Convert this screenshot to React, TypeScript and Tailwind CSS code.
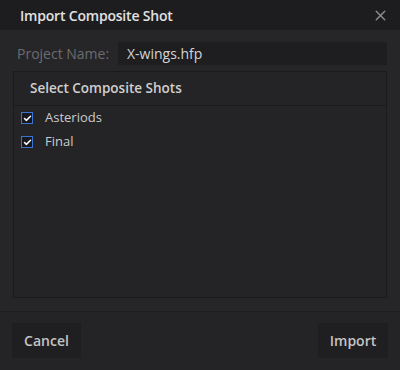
import { X, Check } from "lucide-react"

const shots = ["Asteriods", "Final"]

export default function App() {
    return (
        <div
            className="w-[400px] h-[370px] bg-[#262628] flex flex-col overflow-hidden"
            style={{ fontFamily: '"Open Sans", "Liberation Sans", sans-serif' }}
        >
            {/* Title bar */}
            <div className="h-[30px] bg-[#1d1d1f] flex items-center justify-between pl-5 pr-[11px] shrink-0">
                <span className="text-[14px] font-semibold text-[#e2e2e2] tracking-[-0.2px]">Import Composite Shot</span>
                <X className="w-[17px] h-[17px] text-[#8c8c8c]" strokeWidth={2} />
            </div>

            {/* Body */}
            <div className="flex-1 flex flex-col px-[13px] pt-3">
                <div className="flex items-center h-[23px]">
                    <span className="w-[105px] pl-1 text-[14px] text-[#6c6c6e]">Project Name:</span>
                    <div className="flex-1 h-full bg-[#1e1e20] flex items-center pl-[9px] text-[14px] text-[#d4d4d4]">
                        X-wings.hfp
                    </div>
                </div>

                <div className="mt-[6px] h-[227px] bg-[#242426] border border-[#1b1b1d] flex flex-col">
                    <div className="h-[34px] flex items-center pl-4 border-b border-[#1b1b1d] text-[13.5px] font-semibold text-[#cfcfcf]">
                        Select Composite Shots
                    </div>
                    <div className="flex flex-col">
                        {shots.map((s) => (
                            <div key={s} className="h-[24px] flex items-center pl-[7px] gap-[12px]">
                                <div className="w-[12px] h-[12px] border border-[#3d74d4] bg-[#16181d] flex items-center justify-center">
                                    <Check className="w-[9px] h-[9px] text-white" strokeWidth={4} />
                                </div>
                                <span className="text-[13px] text-[#cbcbcb]">{s}</span>
                            </div>
                        ))}
                    </div>
                </div>
            </div>

            {/* Footer */}
            <div className="h-[59px] border-t border-[#1f1f21] bg-[#242426] flex items-start justify-between px-[12px] pt-[11px] shrink-0">
                <button className="w-[69px] h-[35px] bg-[#1f1f21] text-[14px] font-semibold text-[#c4c4c4]">Cancel</button>
                <button className="w-[70px] h-[35px] bg-[#1f1f21] text-[14px] font-semibold text-[#c4c4c4]">Import</button>
            </div>
        </div>
    )
}
